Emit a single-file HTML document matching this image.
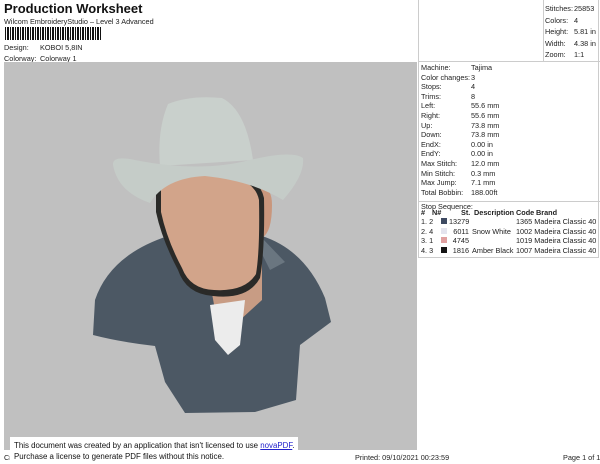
<!DOCTYPE html>
<html><head><style>
body{margin:0;width:600px;height:464px;background:#fff;font-family:"Liberation Sans",sans-serif;font-size:7.3px;color:#222;position:relative;overflow:hidden}
.a{position:absolute;white-space:nowrap}
</style></head><body>
<div class="a" style="left:4px;top:1px;font-size:13px;font-weight:bold;color:#111">Production Worksheet</div>
<div class="a" style="left:4px;top:17px">Wilcom EmbroideryStudio – Level 3 Advanced</div>
<div class="a" style="left:5px;top:27px;width:96px;height:13px;background:repeating-linear-gradient(90deg,#111 0 1px,#fff 1px 2px,#111 2px 3px,#111 3px 4px,#fff 4px 5px)"></div>
<div class="a" style="left:67px;top:30px;font-size:11px;font-weight:bold">,</div>
<div class="a" style="left:4px;top:43px">Design:</div><div class="a" style="left:40px;top:43px">KOBOI 5,8IN</div>
<div class="a" style="left:4px;top:54px">Colorway:</div><div class="a" style="left:40px;top:54px">Colorway 1</div>
<div class="a" style="left:418px;top:0;width:181px;height:258px;border:1px solid #ccc;border-top:none;box-sizing:border-box"></div>
<div class="a" style="left:543px;top:0;width:1px;height:61px;background:#ccc"></div>
<div class="a" style="left:418px;top:61px;width:182px;height:1px;background:#ccc"></div>
<div class="a" style="left:418px;top:201px;width:182px;height:1px;background:#ccc"></div>
<div class="a" style="left:545px;top:3px;line-height:11.5px">Stitches:<br>Colors:<br>Height:<br>Width:<br>Zoom:</div>
<div class="a" style="left:574px;top:3px;line-height:11.5px">25853<br>4<br>5.81 in<br>4.38 in<br>1:1</div>
<div class="a" style="left:421px;top:63px;line-height:9.6px">Machine:<br>Color changes:<br>Stops:<br>Trims:<br>Left:<br>Right:<br>Up:<br>Down:<br>EndX:<br>EndY:<br>Max Stitch:<br>Min Stitch:<br>Max Jump:<br>Total Bobbin:</div>
<div class="a" style="left:471px;top:63px;line-height:9.6px">Tajima<br>3<br>4<br>8<br>55.6 mm<br>55.6 mm<br>73.8 mm<br>73.8 mm<br>0.00 in<br>0.00 in<br>12.0 mm<br>0.3 mm<br>7.1 mm<br>188.00ft</div>
<div class="a" style="left:421px;top:202px">Stop Sequence:</div>
<div class="a" style="left:421px;top:208px;line-height:9.6px;font-weight:bold;text-decoration:underline">
<span class="a" style="left:0">#</span><span class="a" style="left:11px">N#</span><span class="a" style="left:40px">St.</span><span class="a" style="left:53px">Description</span><span class="a" style="left:95px">Code</span><span class="a" style="left:115px">Brand</span></div>
<div class="a" style="left:421px;top:217px;line-height:9.6px">1. 2<br>2. 4<br>3. 1<br>4. 3</div>
<div class="a" style="left:441px;top:218px;width:6px;height:6px;background:#3e4a62"></div>
<div class="a" style="left:441px;top:228px;width:6px;height:6px;background:#e4e4ee"></div>
<div class="a" style="left:441px;top:237px;width:6px;height:6px;background:#e0a0a0"></div>
<div class="a" style="left:441px;top:247px;width:6px;height:6px;background:#151515"></div>
<div class="a" style="left:449px;top:217px;line-height:9.6px;text-align:right;width:20px">13279<br>6011<br>4745<br>1816</div>
<div class="a" style="left:472px;top:217px;line-height:9.6px"><br>Snow White<br><br>Amber Black</div>
<div class="a" style="left:516px;top:217px;line-height:9.6px">1365 Madeira Classic 40<br>1002 Madeira Classic 40<br>1019 Madeira Classic 40<br>1007 Madeira Classic 40</div>
<div class="a" style="left:4px;top:62px;width:413px;height:388px;background:#c0c0c0"></div>
<svg class="a" style="left:0;top:0" width="600" height="464">
<path d="M95,300 Q110,255 168,236 L262,236 Q305,250 325,298 L331,322 L300,345 L296,400 L255,412 L185,413 L165,382 L155,346 Q120,342 93,335 Z" fill="#4c5864"/>
<path d="M175,240 L190,285 L205,282 L195,245Z M255,240 L270,270 L285,262 L262,238Z" fill="#6a7680"/>
<path d="M205,255 L262,250 L262,300 L240,320 L215,310Z" fill="#c89c84"/>
<path d="M210,305 L245,300 L240,345 L228,355 L215,340Z" fill="#ececec"/>
<path d="M258,188 Q272,185 272,205 Q272,232 262,238 Z" fill="#c9967c"/>
<path d="M156,185 Q165,170 210,171 Q258,170 264,198 Q265,250 260,278 Q248,300 213,296 Q186,294 178,270 Q162,240 156,212 Z" fill="#2a2a28"/>
<path d="M161,188 Q170,175 210,175 Q254,175 259,200 Q260,250 256,274 Q245,292 214,290 Q190,289 182,268 Q167,240 161,212 Z" fill="#d2a48a"/>
<path d="M168,104 Q190,95 222,98 Q246,110 253,160 L160,166 Q157,130 168,104 Z" fill="#c9d0cc"/>
<path d="M113,165 Q112,155 135,160 Q200,173 250,160 Q292,150 303,158 Q305,175 283,200 Q252,181 205,176 Q165,178 150,203 Q118,192 113,165Z" fill="#c5ccc8"/>
</svg>
<div class="a" style="left:4px;top:453px">Cr</div>
<div class="a" style="left:10px;top:437px;width:288px;height:27px;background:#fff"></div>
<div class="a" style="left:14px;top:440px;font-size:7.9px;line-height:11px;color:#111">This document was created by an application that isn't licensed to use <span style="color:#22c;text-decoration:underline">novaPDF</span>.<br>Purchase a license to generate PDF files without this notice.</div>
<div class="a" style="left:355px;top:453px">Printed: 09/10/2021 00:23:59</div>
<div class="a" style="left:563px;top:453px">Page 1 of 1</div>
</body></html>
